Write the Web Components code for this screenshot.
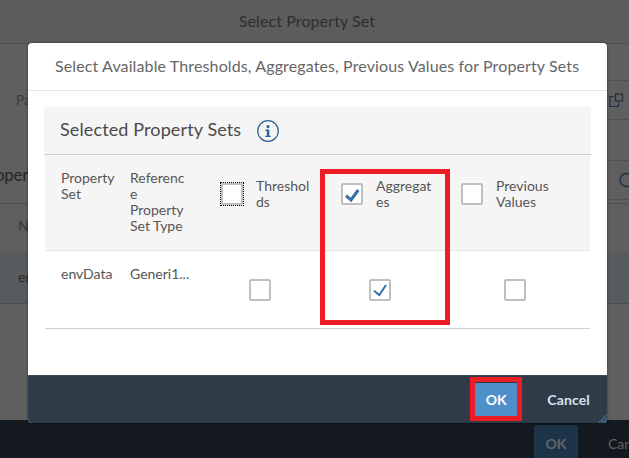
<!DOCTYPE html>
<html>
<head>
<meta charset="utf-8">
<title>Select Property Set</title>
<style>
  html, body { margin: 0; padding: 0; height: 100%; overflow: hidden; }
  body { font-family: Lato, "Liberation Sans", sans-serif; }
</style>
</head>
<body>
<page-backdrop title-text="Select Property Set">
  <select-dialog heading="Select Available Thresholds, Aggregates, Previous Values for Property Sets">
    <property-table></property-table>
  </select-dialog>
  <mark-box style="left:320px;top:169px;width:130px;height:156px"></mark-box>
  <mark-box style="left:470px;top:377px;width:52px;height:44px"></mark-box>
</page-backdrop>

<script>
class PageBackdrop extends HTMLElement {
  constructor() {
    super();
    this.shadowDOM = this.attachShadow({ mode: "open" });
  }

  connectedCallback() {
    this.shadowDOM.innerHTML = `
      <style>
        :host {
          display: flex;
          flex-direction: column;
          position: relative;
          width: 629px;
          height: 458px;
          overflow: hidden;
          background: #5f5f5f;
          color: #2b2b2b;
          font-size: 14px;
        }
        .bar {
          height: 43px;
          flex: none;
          display: flex;
          align-items: center;
          justify-content: center;
          background: #5c5c5c;
          border-bottom: 1px solid #505050;
          font-size: 16px;
          letter-spacing: 0.1px;
          color: #2e2e2e;
          padding-right: 15px;
        }
        .bar span { margin-bottom: 3px; }
        .form {
          height: 159px;
          flex: none;
          display: flex;
          justify-content: space-between;
          border-bottom: 1px solid #505050;
        }
        .label { padding: 47px 0 0 16px; color: #3a3a3a; }
        .heading {
          margin: 55px 0 0 -5px;
          font-size: 17px;
          letter-spacing: -0.3px;
          line-height: 24px;
          color: #262626;
        }
        .fields { width: 22px; padding-top: 36px; }
        .field {
          height: 38px;
          border: solid #505050;
          border-width: 1px 0;
          display: flex;
          align-items: center;
        }
        .field.search { margin-top: 40px; }
        .field svg { display: block; }
        .field .copy { margin-left: 1.5px; }
        .cols {
          height: 49px;
          flex: none;
          box-sizing: border-box;
          padding: 13px 0 0 18px;
          color: #3a3a3a;
        }
        .row {
          height: 51px;
          flex: none;
          box-sizing: border-box;
          padding: 15px 0 0 18px;
          background: #565b5f;
          border-bottom: 1px solid #4b4f52;
          color: #2b2b2b;
        }
        .fill { flex: 1; }
        .actions {
          height: 38px;
          flex: none;
          box-sizing: border-box;
          padding: 5px 0 0 534px;
          display: flex;
          gap: 30px;
          background: #13191e;
          color: #5f6468;
          font-weight: 700;
          white-space: nowrap;
        }
        .actions span { padding-top: 10px; }
        .actions .ok {
          width: 44px;
          height: 40px;
          flex: none;
          box-sizing: border-box;
          text-align: center;
          background: #1d3448;
          border-radius: 3px;
        }
        .actions .cancel { font-weight: 400; }
      </style>
      <div class="bar"><span>${this.getAttribute("title-text")}</span></div>
      <div class="form">
        <div>
          <div class="label">Pa</div>
          <div class="heading">oper</div>
        </div>
        <div class="fields">
          <div class="field">
            <svg class="copy" width="15" height="15" viewBox="0 0 15 15" fill="none" stroke="#1e2f40" stroke-width="1.2">
              <path d="M5 3.5H1v10h8.5v-4"/>
              <rect x="6.5" y="1" width="7" height="7"/>
            </svg>
          </div>
          <div class="field search">
            <svg width="22" height="20" viewBox="0 0 22 20" fill="none" stroke="#1e2f40" stroke-width="1.4">
              <circle cx="19.5" cy="10" r="6.5"/>
            </svg>
          </div>
        </div>
      </div>
      <div class="cols">N</div>
      <div class="row">en</div>
      <div class="fill"></div>
      <div class="actions">
        <span class="ok">OK</span>
        <span class="cancel">Cancel</span>
      </div>
      <slot></slot>
    `;
  }
}

class SelectDialog extends HTMLElement {
  constructor() {
    super();
    this.shadowDOM = this.attachShadow({ mode: "open" });
  }

  connectedCallback() {
    this.shadowDOM.innerHTML = `
      <style>
        :host {
          display: flex;
          flex-direction: column;
          position: absolute;
          left: 28px;
          top: 43px;
          width: 579px;
          height: 380px;
          overflow: hidden;
          background: #fff;
          border-radius: 4px;
          box-shadow: 0 0 3px rgba(0, 0, 0, 0.45);
        }
        header {
          height: 47px;
          flex: none;
          display: flex;
          align-items: center;
          padding-left: 27px;
          border-bottom: 1px solid #e5e5e5;
          font-size: 16px;
          letter-spacing: 0.12px;
          color: #666;
          white-space: nowrap;
        }
        header span { margin-bottom: 2px; }
        main { flex: 1; padding: 16px; }
        footer {
          height: 48px;
          flex: none;
          position: relative;
          box-sizing: border-box;
          display: flex;
          align-items: center;
          justify-content: flex-end;
          gap: 30px;
          padding-right: 17px;
          background: #2f3c48;
          border-top: 1px solid #3b4956;
          font-size: 14px;
          font-weight: 700;
          color: #d3e3f2;
        }
        footer .cancel { letter-spacing: 0.15px; }
        .ok {
          width: 42px;
          height: 34px;
          display: flex;
          align-items: center;
          justify-content: center;
          background: #4e8fca;
          color: #fff;
        }
        .grip { position: absolute; right: 0; bottom: 0; display: block; }
      </style>
      <header><span>${this.getAttribute("heading")}</span></header>
      <main><slot></slot></main>
      <footer>
        <span class="ok">OK</span>
        <span class="cancel">Cancel</span>
        <svg class="grip" width="9" height="9" viewBox="0 0 9 9" stroke="#4e8fca" stroke-width="1">
          <path d="M0.5 9L9 0.5M3.5 9L9 3.5M6.5 9L9 6.5"/>
        </svg>
      </footer>
    `;
  }
}

class PropertyTable extends HTMLElement {
  constructor() {
    super();
    this.shadowDOM = this.attachShadow({ mode: "open" });
  }

  connectedCallback() {
    this.shadowDOM.innerHTML = `
      <style>
        :host { display: block; font-size: 14px; line-height: 16px; color: #555; }
        .title {
          height: 47px;
          display: flex;
          align-items: center;
          gap: 16px;
          padding-left: 16px;
          background: #f5f5f5;
          border-bottom: 1px solid #ccc;
          font-size: 18px;
          letter-spacing: 0.12px;
          color: #4a4a4a;
        }
        .title span { margin-bottom: 3px; }
        .title svg { display: block; }
        table {
          border-collapse: collapse;
          table-layout: fixed;
          width: 545px;
          margin-left: 1px;
        }
        thead tr { height: 95px; background: #f5f5f5; border-bottom: 1px solid #e5e5e5; }
        tbody tr { height: 78px; border-bottom: 1px solid #d0d0d0; }
        td, th { padding: 0; vertical-align: top; text-align: left; font-weight: 400; }
        .text { padding: 15px 0 0 16px; }
        th.narrow { padding-right: 12px; overflow-wrap: anywhere; }
        td.text { white-space: nowrap; }
        .option { display: flex; gap: 13px; padding: 23px 0 0 21px; }
        .option check-box { margin-top: 5px; }
        .option span { width: 60px; overflow-wrap: anywhere; }
        .center { text-align: center; padding-top: 28px; }
      </style>
      <div class="title">
        <span>Selected Property Sets</span>
        <svg width="22" height="22" viewBox="0 0 22 22">
          <circle cx="11" cy="11" r="10.3" fill="none" stroke="#2f6496" stroke-width="1.2"/>
          <circle cx="11" cy="6.6" r="1.6" fill="#2f6496"/>
          <path d="M8.4 9.6h3.9v6.2h1.5v1.3H8.3v-1.3h1.5v-4.9H8.4z" fill="#2f6496"/>
        </svg>
      </div>
      <table>
        <colgroup>
          <col style="width:69px"><col style="width:86px">
          <col style="width:120px"><col style="width:120px"><col style="width:150px">
        </colgroup>
        <thead>
          <tr>
            <th class="text">Property Set</th>
            <th class="text narrow">Reference Property Set Type</th>
            <th><div class="option"><check-box focused></check-box><span>Thresholds</span></div></th>
            <th><div class="option"><check-box checked="bold"></check-box><span>Aggregates</span></div></th>
            <th><div class="option"><check-box></check-box><span>Previous Values</span></div></th>
          </tr>
        </thead>
        <tbody>
          <tr>
            <td class="text">envData</td>
            <td class="text">Generi1...</td>
            <td class="center"><check-box></check-box></td>
            <td class="center"><check-box checked="thin"></check-box></td>
            <td class="center"><check-box></check-box></td>
          </tr>
        </tbody>
      </table>
    `;
  }
}

class CheckBox extends HTMLElement {
  constructor() {
    super();
    this.shadowDOM = this.attachShadow({ mode: "open" });
  }

  connectedCallback() {
    const checked = this.getAttribute("checked");
    let mark = "";
    if (checked === "bold") {
      mark = `<polyline points="5,12.7 10,17 17.3,7" stroke-width="3"/>`;
    } else if (checked === "thin") {
      mark = `<polyline points="5,11.7 10.3,16 17,6" stroke-width="2"/>`;
    }
    this.shadowDOM.innerHTML = `
      <style>
        :host {
          display: inline-block;
          flex: none;
          position: relative;
          width: 22px;
          height: 22px;
          vertical-align: top;
        }
        svg {
          display: block;
          box-sizing: border-box;
          width: 22px;
          height: 22px;
          background: #fff;
          border: 2px solid #bfbfbf;
          border-radius: 2px;
        }
        :host([focused])::after {
          content: "";
          position: absolute;
          inset: -1px;
          border: 1px dotted #000;
        }
      </style>
      <svg viewBox="2 2 18 18" fill="none" stroke="#346fa8">${mark}</svg>
    `;
  }
}

class MarkBox extends HTMLElement {
  constructor() {
    super();
    this.shadowDOM = this.attachShadow({ mode: "open" });
    this.shadowDOM.innerHTML = `
      <style>
        :host {
          display: block;
          position: absolute;
          box-sizing: border-box;
          border: 5px solid #ee1c25;
        }
      </style>
    `;
  }
}

customElements.define("page-backdrop", PageBackdrop);
customElements.define("select-dialog", SelectDialog);
customElements.define("property-table", PropertyTable);
customElements.define("check-box", CheckBox);
customElements.define("mark-box", MarkBox);
</script>
</body>
</html>
